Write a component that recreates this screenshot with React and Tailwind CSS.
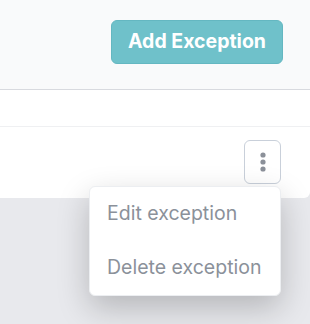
import { useState } from 'react'

// dots icon for the row action button
function DotsIcon() {
  return (
    <svg width="6" height="20" viewBox="0 0 6 20" className="fill-[#8b9099]">
      <circle cx="3" cy="3" r="2.6" />
      <circle cx="3" cy="10" r="2.6" />
      <circle cx="3" cy="17" r="2.6" />
    </svg>
  )
}

export default function App() {
  const [open] = useState(true)

  return (
    <div className="min-h-screen w-[310px] h-[324px] overflow-hidden bg-[#e8e9ed] font-['Inter',sans-serif]">
      <div className="rounded-br-md bg-white">
        <div className="flex h-[90px] items-start justify-end border-b border-[#d8dadf] bg-[#f9fafb] pr-[27px] pt-[20px]">
          <button className="h-[44px] w-[172px] rounded-md border border-[#64b7c1] bg-[#6fc1ca] text-[19.5px] font-bold text-white">
            Add Exception
          </button>
        </div>
        <div className="h-[37px] border-b border-[#eff0f2]" />
        <div className="relative flex h-[71px] items-start justify-end pr-[29px] pt-[13px]">
          <button className="flex h-[44px] w-[37px] items-center justify-center rounded-md border border-[#c9d0da] bg-white">
            <DotsIcon />
          </button>
          {open && (
            <div className="absolute left-[89px] top-[59px] z-10 w-[192px] rounded-md border border-[#eceef1] bg-white shadow-[0_12px_32px_rgba(0,0,0,0.22)]">
              <div className="flex h-[54px] items-center whitespace-nowrap px-[17px] text-[19.5px] text-[#8b919a]">Edit exception</div>
              <div className="flex h-[54px] items-center whitespace-nowrap px-[17px] text-[19.5px] text-[#8b919a]">Delete exception</div>
            </div>
          )}
        </div>
      </div>
    </div>
  )
}
